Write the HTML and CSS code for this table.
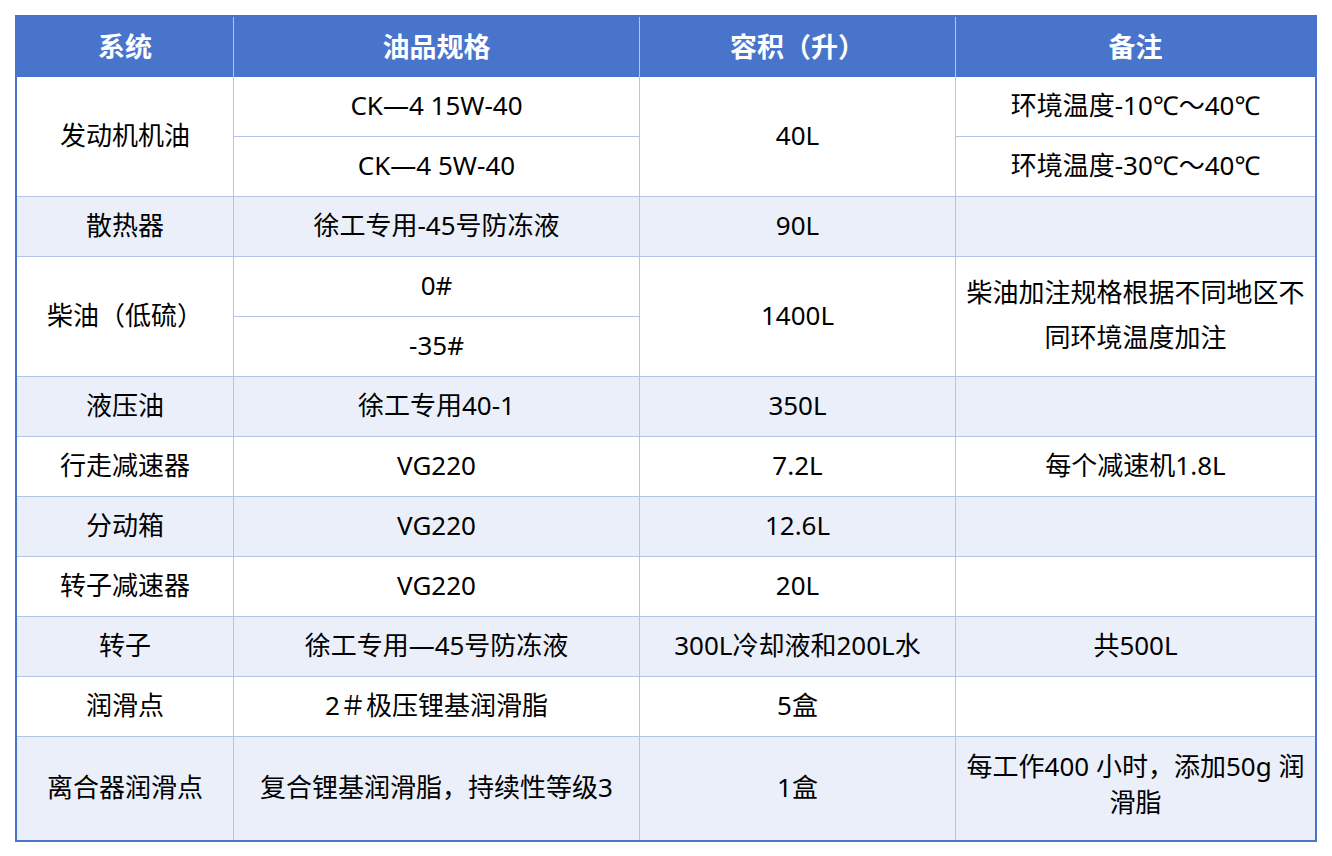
FILE: index.html
```html
<!DOCTYPE html>
<html lang="zh-CN">
<head>
<meta charset="utf-8">
<title>油品规格</title>
<link rel="stylesheet" href="styles.css">
</head>
<body>
<table class="spec">
  <colgroup>
    <col class="c1"><col class="c2"><col class="c3"><col class="c4">
  </colgroup>
  <thead>
    <tr class="head"><th>系统</th><th>油品规格</th><th>容积（升）</th><th class="last">备注</th></tr>
  </thead>
  <tbody>
    <tr class="r"><td rowspan="2">发动机机油</td><td>CK—4 15W-40</td><td rowspan="2">40L</td><td class="last">环境温度-10℃～40℃</td></tr>
    <tr class="r"><td>CK—4 5W-40</td><td class="last">环境温度-30℃～40℃</td></tr>
    <tr class="r alt"><td>散热器</td><td>徐工专用-45号防冻液</td><td>90L</td><td class="last"></td></tr>
    <tr class="r"><td rowspan="2">柴油（低硫）</td><td>0#</td><td rowspan="2">1400L</td><td rowspan="2" class="last tall">柴油加注规格根据不同地区不同环境温度加注</td></tr>
    <tr class="r"><td>-35#</td></tr>
    <tr class="r alt"><td>液压油</td><td>徐工专用40-1</td><td>350L</td><td class="last"></td></tr>
    <tr class="r"><td>行走减速器</td><td>VG220</td><td>7.2L</td><td class="last">每个减速机1.8L</td></tr>
    <tr class="r alt"><td>分动箱</td><td>VG220</td><td>12.6L</td><td class="last"></td></tr>
    <tr class="r"><td>转子减速器</td><td>VG220</td><td>20L</td><td class="last"></td></tr>
    <tr class="r alt"><td>转子</td><td>徐工专用—45号防冻液</td><td>300L冷却液和200L水</td><td class="last">共500L</td></tr>
    <tr class="r"><td>润滑点</td><td>2＃极压锂基润滑脂</td><td>5盒</td><td class="last"></td></tr>
    <tr class="r alt end"><td>离合器润滑点</td><td>复合锂基润滑脂，持续性等级3</td><td>1盒</td><td class="last wrap">每工作400 小时，添加50g 润滑脂</td></tr>
  </tbody>
</table>
</body>
</html>
```

FILE: styles.css
```css
html, body {
  margin: 0;
  padding: 0;
  background: #ffffff;
}
body {
  padding: 15px;
  font-family: "Noto Sans", "Noto Sans CJK SC", sans-serif;
  color: #000;
}
.spec {
  width: 1302px;
  table-layout: fixed;
  border-collapse: separate;
  border-spacing: 0;
  border: 2px solid #4874cb;
  box-sizing: border-box;
}
.c1 { width: 217px; }
.c2 { width: 406px; }
.c3 { width: 316px; }
.c4 { width: 359px; }
.spec th, .spec td {
  padding: 0 0 3px;
  text-align: center;
  vertical-align: middle;
  border-right: 1px solid #b4c6e7;
  border-bottom: 1px solid #b4c6e7;
  box-sizing: border-box;
}
.spec th.last, .spec td.last { border-right: none; }
.head th {
  height: 60px;
  background: #4874cb;
  color: #ffffff;
  font-size: 27px;
  font-weight: 700;
  border-bottom: none;
}
.r td {
  height: 60px;
  font-size: 26px;
  line-height: 36px;
}
.alt td { background: #eaeff9; }
.spec td.tall { padding: 0 8px 3px; line-height: 45px; }
.end td { height: 103px; border-bottom: none; }
.spec td.wrap { padding: 0 4px 9px; }
```
